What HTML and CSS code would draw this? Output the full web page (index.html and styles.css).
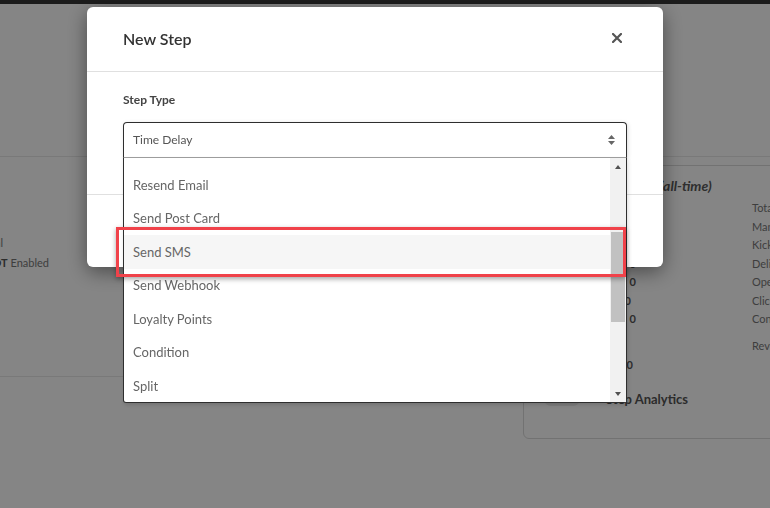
FILE: index.html
```html
<!DOCTYPE html>
<html lang="en">
<head>
    <meta charset="UTF-8">
    <meta name="viewport" content="width=device-width, initial-scale=1.0">
    <title>New Step</title>
    <link rel="stylesheet" href="styles.css">
</head>
<body>
    <div class="nav"></div>
    <div class="page-head"></div>
    <div class="content">
        <section class="panel">
            <div class="meta">
                <div class="meta-row meta-row-short">Sending: Manual</div>
                <div class="meta-row">SMS: <b>NOT</b>&nbsp;Enabled</div>
            </div>
        </section>
        <section class="card">
            <h3 class="card-title">Step Performance (all-time)</h3>
            <div class="stats">
                <ul class="stats-col stats-left">
                    <li>Enrolled: <b>0</b></li>
                    <li>Active: <b>0</b></li>
                    <li>Completed: <b>0</b></li>
                    <li>Exited: <b>0</b></li>
                    <li>Sent: <b>0</b></li>
                    <li class="nudge">Opens: <b>0</b></li>
                    <li>Clicks: <b>0</b></li>
                    <li class="gap-lg">Revenue: <b>$0.00</b></li>
                </ul>
                <ul class="stats-col stats-right">
                    <li>Total Sent: 0</li>
                    <li>Manual: 0</li>
                    <li>Kicked Off: 0</li>
                    <li>Delivered: 0</li>
                    <li>Opened: 0</li>
                    <li>Clicked: 0</li>
                    <li>Converted: 0</li>
                    <li class="gap">Revenue: $0.00</li>
                </ul>
            </div>
            <div class="analytics">
                <span class="toggle"></span>
                <span class="analytics-label">Step Analytics</span>
            </div>
        </section>
    </div>

    <div class="backdrop">
        <div class="modal">
            <div class="modal-header">
                <h2>New Step</h2>
                <svg class="close" width="10" height="10" viewBox="0 0 10 10">
                    <path d="M1 1L9 9M9 1L1 9" stroke="#555" stroke-width="2.2" stroke-linecap="square"/>
                </svg>
            </div>
            <div class="modal-body">
                <label class="field-label">Step Type</label>
                <div class="select">
                    <div class="select-box">
                        <span>Time Delay</span>
                        <svg width="7" height="12" viewBox="0 0 7 12">
                            <path d="M0 5L3.5 1L7 5Z M0 7L3.5 11L7 7Z" fill="#666"/>
                        </svg>
                    </div>
                    <div class="select-list">
                        <ul class="options">
                            <li>Resend Email</li>
                            <li>Send Post Card</li>
                            <li class="hover">Send SMS</li>
                            <li>Send Webhook</li>
                            <li>Loyalty Points</li>
                            <li>Condition</li>
                            <li>Split</li>
                        </ul>
                        <div class="scrollbar">
                            <div class="sb-btn"><span class="tri-up"></span></div>
                            <div class="sb-track"><div class="sb-thumb"></div></div>
                            <div class="sb-btn"><span class="tri-down"></span></div>
                        </div>
                    </div>
                </div>
            </div>
            <div class="modal-footer"></div>
        </div>
    </div>
</body>
</html>
```

FILE: styles.css
```css
body {
    margin: 0;
    font-family: "Lato", "Open Sans", sans-serif;
    color: #777;
    background: #fff;
    overflow: hidden;
}

ul {
    list-style: none;
    margin: 0;
    padding: 0;
}

/* page behind the modal */
.nav {
    height: 4px;
    background: #363636;
}
.page-head {
    height: 153px;
    border-bottom: 1px solid #e9e9e9;
    box-sizing: border-box;
}
.content {
    display: grid;
    grid-template-columns: 510px 420px;
    gap: 13px;
}
.panel {
    height: 220px;
    box-sizing: border-box;
    border-bottom: 1px solid #e9e9e9;
    padding-top: 76px;
}
.meta {
    width: 49px;
    font-size: 11px;
    line-height: 20px;
    white-space: nowrap;
}
.meta-row {
    display: flex;
    justify-content: flex-end;
}
.meta-row b {
    color: #555;
}
.meta-row-short {
    padding-right: 46px;
}
.card {
    margin-top: 8px;
    height: 274px;
    box-sizing: border-box;
    border: 1px solid #dadada;
    border-radius: 6px;
    padding: 11px 20px 0;
}
.card-title {
    margin: 0;
    padding-left: 8px;
    font-size: 14px;
    line-height: 18px;
    font-style: italic;
    font-weight: 700;
    color: #5a5a5a;
}
.stats {
    display: flex;
    gap: 116px;
    margin-top: 4px;
    font-size: 11px;
    white-space: nowrap;
}
.stats-col li {
    line-height: 18.5px;
}
.stats-col li.gap {
    margin-top: 8.5px;
}
.stats-col li.gap-lg {
    margin-top: 27px;
}
.stats-left {
    width: 92px;
    text-align: right;
}
.stats-left b {
    color: #555;
}
.stats-left .nudge {
    padding-right: 5px;
}
.stats-left .gap-lg {
    padding-right: 3px;
}
.analytics {
    display: flex;
    align-items: center;
    margin-top: 15px;
    height: 20px;
}
.toggle {
    width: 36px;
    height: 14px;
    border-radius: 7px;
    background: #ececec;
    margin-right: 26px;
}
.analytics-label {
    font-size: 13px;
    font-weight: 700;
    color: #555;
}

/* modal */
.backdrop {
    position: fixed;
    inset: 0;
    background: rgba(0, 0, 0, 0.48);
}
.modal {
    width: 576px;
    margin: 7px 0 0 87px;
    background: #fff;
    border-radius: 6px;
    box-shadow: 0 5px 20px rgba(0, 0, 0, 0.45);
}
.modal-header {
    height: 65px;
    box-sizing: border-box;
    display: flex;
    align-items: center;
    justify-content: space-between;
    padding: 0 41px 2px 36px;
    border-bottom: 1px solid #e0e0e0;
}
.modal-header h2 {
    margin: 0;
    font-size: 16px;
    font-weight: 600;
    color: #333;
}
.modal-body {
    padding: 20px 36px 36px;
}
.field-label {
    display: block;
    font-size: 12px;
    line-height: 16px;
    font-weight: 700;
    color: #444;
    margin-bottom: 14px;
}
.modal-footer {
    height: 72px;
    border-top: 1px solid #e0e0e0;
}

/* open select */
.select {
    position: relative;
}
.select-box {
    height: 36px;
    box-sizing: border-box;
    display: flex;
    align-items: center;
    justify-content: space-between;
    padding: 0 11px 1px 9px;
    border: 1px solid #2e2e2e;
    border-bottom-color: #a0a0a0;
    border-radius: 4px 4px 0 0;
    font-size: 12px;
    color: #555;
    box-shadow: 1px 1px 4px rgba(0, 0, 0, 0.15);
}
.select-list {
    position: absolute;
    top: 100%;
    left: 0;
    right: 0;
    height: 245px;
    box-sizing: border-box;
    display: flex;
    background: #fff;
    border: 1px solid #2e2e2e;
    border-top: 0;
    border-radius: 0 0 3px 3px;
    box-shadow: 1px 2px 4px rgba(0, 0, 0, 0.15);
}
.options {
    flex: 1;
    padding-top: 10px;
}
.options li {
    height: 33.5px;
    display: flex;
    align-items: center;
    padding-left: 9px;
    font-size: 13px;
    color: #666;
}
.options li.hover {
    position: relative;
    background: #f6f6f6;
}
.options li.hover::after {
    content: "";
    position: absolute;
    top: -8px;
    left: -8px;
    right: -16px;
    bottom: -8px;
    border: 3px solid #f0424a;
    box-shadow: 0 2px 5px rgba(0, 0, 0, 0.35);
}
.scrollbar {
    width: 16px;
    display: flex;
    flex-direction: column;
    background: #f1f1f1;
}
.sb-btn {
    height: 17px;
    display: flex;
    align-items: center;
    justify-content: center;
}
.tri-up, .tri-down {
    width: 0;
    height: 0;
    border-left: 3.5px solid transparent;
    border-right: 3.5px solid transparent;
}
.tri-up {
    border-bottom: 4px solid #505050;
}
.tri-down {
    border-top: 4px solid #505050;
}
.sb-track {
    flex: 1;
}
.sb-thumb {
    margin: 57px 1px 0;
    height: 90px;
    background: #c1c1c1;
}
```
